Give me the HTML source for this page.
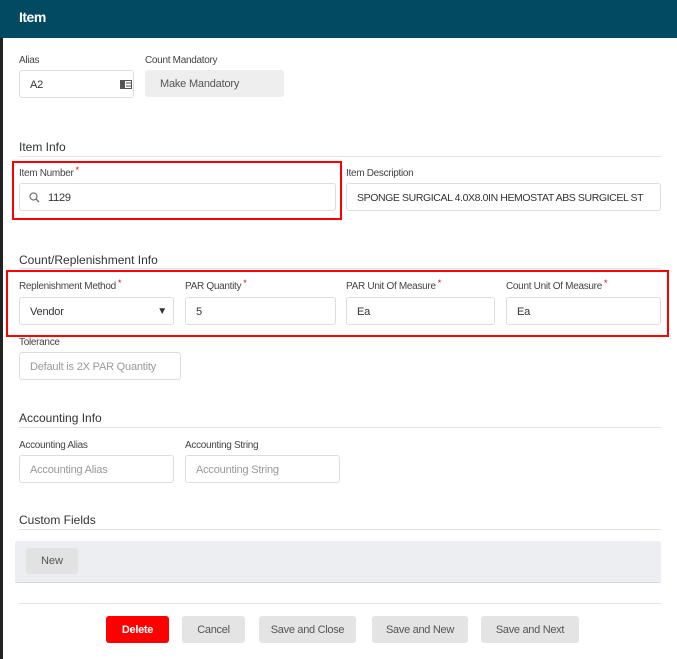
<!DOCTYPE html>
<html><head><style>
*{box-sizing:border-box;margin:0;padding:0}
body{width:677px;height:659px;overflow:hidden;background:#fff;font-family:"Liberation Sans",sans-serif;position:relative;color:#333;white-space:nowrap}
.a{position:absolute}
.lbl{position:absolute;font-size:10px;color:#444;letter-spacing:-0.3px}
.lbl b{color:#e00;font-weight:normal;font-size:9px;vertical-align:top;position:relative;top:-3px;margin-left:2px}
.in{position:absolute;height:28px;border:1px solid #ddd;border-radius:3px;background:#fff;font-size:11px;color:#333;line-height:28px;padding-left:10px;overflow:hidden;letter-spacing:-0.2px}
.ph{color:#999}
.h{position:absolute;font-size:12px;color:#333;left:19px}
.line{position:absolute;left:19px;width:642px;height:1px;background:#e2e2e2}
.btn{position:absolute;top:616px;height:27px;border-radius:3px;background:#e4e4e4;font-size:11px;color:#555;text-align:center;line-height:28px;letter-spacing:-0.3px}
.red{position:absolute;border:2px solid #f00}
</style></head><body>
<div class="a" style="left:0;top:0;width:3px;height:659px;background:#222"></div>
<div class="a" style="left:0;top:0;width:677px;height:38px;background:#024a62"></div>
<div class="a" style="left:19px;top:9px;color:#fff;font-weight:bold;font-size:14px;letter-spacing:-0.5px">Item</div>

<div class="lbl" style="left:19px;top:55px">Alias</div>
<div class="in" style="left:19px;top:70px;width:115px;height:28px">A2</div>
<svg class="a" style="left:120px;top:80px" width="12" height="9"><rect x="0.5" y="0.5" width="11" height="8" fill="none" stroke="#555"/><rect x="1" y="1" width="4" height="7" fill="#555"/><line x1="6" y1="3" x2="11" y2="3" stroke="#555"/><line x1="6" y1="6" x2="11" y2="6" stroke="#555"/></svg>
<div class="lbl" style="left:145px;top:55px">Count Mandatory</div>
<div class="a" style="left:145px;top:70px;width:139px;height:27px;background:#eeeeee;border-radius:3px;font-size:11px;color:#555;line-height:28px;padding-left:15px;letter-spacing:-0.2px">Make Mandatory</div>

<div class="h" style="top:140px">Item Info</div>
<div class="line" style="top:156px"></div>
<div class="red" style="left:12px;top:161px;width:330px;height:59px"></div>
<div class="lbl" style="left:19px;top:168px">Item Number<b>*</b></div>
<div class="in" style="left:19px;top:183px;width:317px;padding-left:28px">1129</div>
<svg class="a" style="left:29px;top:192px" width="11" height="11"><circle cx="4.5" cy="4.5" r="3.5" fill="none" stroke="#777" stroke-width="1.3"/><line x1="7" y1="7" x2="10" y2="10" stroke="#777" stroke-width="1.4"/></svg>
<div class="lbl" style="left:346px;top:168px">Item Description</div>
<div class="in" style="left:346px;top:183px;width:315px;font-size:10.5px;letter-spacing:-0.4px">SPONGE SURGICAL 4.0X8.0IN HEMOSTAT ABS SURGICEL ST</div>

<div class="h" style="top:253px">Count/Replenishment Info</div>
<div class="line" style="top:268px"></div>
<div class="red" style="left:6px;top:270px;width:663px;height:67px"></div>
<div class="lbl" style="left:19px;top:281px">Replenishment Method<b>*</b></div>
<div class="in" style="left:19px;top:297px;width:155px">Vendor<span style="position:absolute;right:6px;font-size:10px">▼</span></div>
<div class="lbl" style="left:185px;top:281px">PAR Quantity<b>*</b></div>
<div class="in" style="left:185px;top:297px;width:151px">5</div>
<div class="lbl" style="left:346px;top:281px">PAR Unit Of Measure<b>*</b></div>
<div class="in" style="left:346px;top:297px;width:149px">Ea</div>
<div class="lbl" style="left:506px;top:281px">Count Unit Of Measure<b>*</b></div>
<div class="in" style="left:506px;top:297px;width:155px">Ea</div>
<div class="lbl" style="left:19px;top:337px">Tolerance</div>
<div class="in ph" style="left:19px;top:352px;width:162px">Default is 2X PAR Quantity</div>

<div class="h" style="top:411px">Accounting Info</div>
<div class="line" style="top:427px"></div>
<div class="lbl" style="left:19px;top:440px">Accounting Alias</div>
<div class="in ph" style="left:19px;top:455px;width:155px">Accounting Alias</div>
<div class="lbl" style="left:185px;top:440px">Accounting String</div>
<div class="in ph" style="left:185px;top:455px;width:155px">Accounting String</div>

<div class="h" style="top:513px">Custom Fields</div>
<div class="line" style="top:529px"></div>
<div class="a" style="left:15px;top:541px;width:646px;height:42px;background:#eceef1;border-bottom:1px solid #d6d8db;border-radius:2px"></div>
<div class="a" style="left:26px;top:548px;width:52px;height:26px;background:#e2e2e2;border-radius:3px;font-size:11px;color:#555;text-align:center;line-height:27px">New</div>
<div class="line" style="top:603px"></div>

<div class="btn" style="left:106px;width:63px;background:#f00;color:#fff;font-weight:bold">Delete</div>
<div class="btn" style="left:182px;width:63px">Cancel</div>
<div class="btn" style="left:259px;width:97px">Save and Close</div>
<div class="btn" style="left:372px;width:96px">Save and New</div>
<div class="btn" style="left:481px;width:98px">Save and Next</div>
</body></html>
